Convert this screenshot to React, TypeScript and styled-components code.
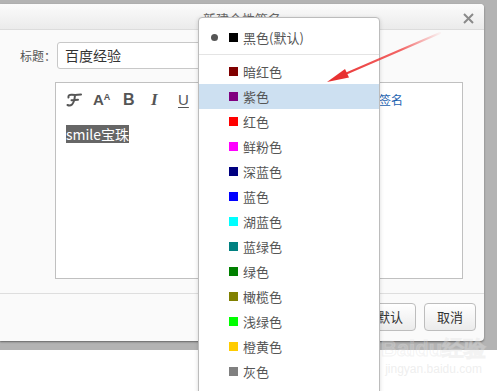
import React from "react";
import styled, { createGlobalStyle } from "styled-components";

const GlobalStyle = createGlobalStyle`
  html, body { margin: 0; padding: 0; height: 100%; overflow: hidden; background: #fff; }
  body { font-family: "Microsoft YaHei", "Noto Sans CJK SC", "Noto Sans", sans-serif; }
  * { box-sizing: border-box; }
`;

const Page = styled.div`
  position: relative;
  width: 497px;
  height: 391px;
  overflow: hidden;
  background: #fff;
`;

const Overlay = styled.div`
  height: 350px;
  background: #b3b3b3;
  padding-top: 4px;
`;

const Dialog = styled.div`
  width: 484px;
  height: 337px;
  background: #fafafa;
  border-radius: 0 4px 4px 0;
  box-shadow: 0 1px 2px rgba(0, 0, 0, 0.45);
  display: flex;
  flex-direction: column;
  overflow: hidden;
`;

const Header = styled.div`
  height: 26px;
  flex: none;
  display: grid;
  grid-template-columns: 32px 1fr 32px;
  align-items: center;
  background: linear-gradient(#fbfbfb, #ebebeb);
  border-bottom: 1px solid #dcdcdc;
`;

const Title = styled.div`
  grid-column: 2;
  text-align: center;
  font-size: 13px;
  line-height: 25px;
  color: #666;
  padding-top: 2px;
`;

const Close = styled.div`
  grid-column: 3;
  display: flex;
  align-items: center;
  justify-content: flex-start;
  padding-left: 11px;
  padding-top: 1px;
`;

const Body = styled.div`
  flex: 1;
  padding: 12px 20px 0 20px;
  display: flex;
  flex-direction: column;
`;

const FieldRow = styled.div`
  display: flex;
  align-items: center;
  height: 27px;
`;

const Label = styled.span`
  width: 37px;
  font-size: 12px;
  color: #555;
  line-height: 27px;
`;

const TextInput = styled.div`
  width: 250px;
  height: 27px;
  border: 1px solid #c8c8c8;
  border-radius: 3px;
  background: #fff;
  padding-left: 7px;
  font-size: 14px;
  line-height: 25px;
  color: #333;
`;

const Editor = styled.div`
  margin: 13px 0 0 35px;
  width: 408px;
  height: 197px;
  border: 1px solid #c0c0c0;
  background: #fff;
  display: flex;
  flex-direction: column;
`;

const Toolbar = styled.div`
  height: 30px;
  display: flex;
  align-items: center;
  padding: 3px 0 0 10px;
  color: #555;
`;

const Tool = styled.span<{ $w: number }>`
  width: ${(p) => p.$w}px;
  display: inline-flex;
  align-items: baseline;
  line-height: 1;
  color: #555;
`;

const BigA = styled.span`
  font-family: "Liberation Sans", Arial, sans-serif;
  font-weight: bold;
  font-size: 15px;
`;

const SmallA = styled.span`
  font-family: "Liberation Sans", Arial, sans-serif;
  font-weight: bold;
  font-size: 9px;
  position: relative;
  top: -5px;
`;

const BoldB = styled.span`
  font-family: "Liberation Sans", Arial, sans-serif;
  font-weight: bold;
  font-size: 16px;
`;

const ItalicI = styled.span`
  font-family: "Liberation Serif", serif;
  font-weight: bold;
  font-style: italic;
  font-size: 17px;
`;

const UnderU = styled.span`
  font-family: "Liberation Sans", Arial, sans-serif;
  font-size: 15px;
  text-decoration: underline;
  text-underline-offset: 2px;
`;

const ToolLink = styled.span`
  margin-left: auto;
  margin-right: 59px;
  font-size: 12px;
  color: #1c62b0;
`;

const Content = styled.div`
  padding: 8px 0 0 10px;
`;

const Selected = styled.span`
  background: #666;
  color: #fff;
  font-size: 14px;
  line-height: 18px;
  display: inline-block;
  height: 18px;
`;

const Footer = styled.div`
  margin: 14px -20px 0 -20px;
  flex: 1;
  border-top: 1px solid #dedede;
  display: flex;
  justify-content: flex-end;
  align-items: flex-start;
  gap: 8px;
  padding: 9px 8px 0 0;
`;

const Button = styled.button`
  height: 28px;
  padding: 0 12px;
  border: 1px solid #bdbdbd;
  border-radius: 4px;
  background: linear-gradient(#ffffff, #ebebeb);
  font-family: "Microsoft YaHei", "Noto Sans CJK SC", sans-serif;
  font-size: 13px;
  color: #333;
  line-height: 26px;
`;

const Menu = styled.div`
  position: absolute;
  left: 198px;
  top: 17px;
  width: 182px;
  height: 400px;
  background: #fff;
  border: 1px solid #bcbcbc;
  border-radius: 4px 4px 0 0;
  box-shadow: 0 1px 4px rgba(0, 0, 0, 0.15);
  padding-top: 7px;
`;

const MenuItem = styled.div<{ $active?: boolean }>`
  height: 25px;
  display: flex;
  align-items: center;
  padding-left: 12px;
  background: ${(p) => (p.$active ? "#cde0f1" : "transparent")};
  font-size: 13px;
  color: #555;
`;

const DotSlot = styled.span`
  width: 18px;
  flex: none;
  display: flex;
  align-items: center;
`;

const Dot = styled.span`
  width: 7px;
  height: 7px;
  border-radius: 50%;
  background: #555;
`;

const Swatch = styled.span<{ $c: string }>`
  width: 9px;
  height: 9px;
  flex: none;
  background: ${(p) => p.$c};
  margin-right: 5px;
`;

const Separator = styled.div`
  height: 1px;
  background: #e4e4e4;
  margin: 4px 0 4px 0;
`;

const ArrowSvg = styled.svg`
  position: absolute;
  left: 0;
  top: 0;
  pointer-events: none;
`;

const Watermark = styled.div`
  position: absolute;
  left: 381px;
  top: 336px;
  display: flex;
  flex-direction: column;
  align-items: center;
  pointer-events: none;
`;

const WmMain = styled.span`
  font-family: "Liberation Sans", Arial, sans-serif;
  font-weight: bold;
  font-size: 22px;
  line-height: 26px;
  color: rgba(255, 255, 255, 0.18);
  -webkit-text-stroke: 1px rgba(215, 215, 215, 0.3);
`;

const WmSub = styled.span`
  font-family: "Liberation Sans", Arial, sans-serif;
  font-size: 12px;
  line-height: 14px;
  color: rgba(225, 225, 225, 0.55);
`;

const colors: [string, string][] = [
  ["暗红色", "#800000"],
  ["紫色", "#800080"],
  ["红色", "#ff0000"],
  ["鲜粉色", "#ff00ff"],
  ["深蓝色", "#000080"],
  ["蓝色", "#0000ff"],
  ["湖蓝色", "#00ffff"],
  ["蓝绿色", "#008080"],
  ["绿色", "#008000"],
  ["橄榄色", "#808000"],
  ["浅绿色", "#00ff00"],
  ["橙黄色", "#ffcc00"],
  ["灰色", "#808080"],
];

export default function App() {
  return (
    <Page>
      <GlobalStyle />
      <Overlay>
        <Dialog>
          <Header>
            <Title>新建个性签名</Title>
            <Close>
              <svg width="11" height="11" viewBox="0 0 11 11">
                <path d="M1 1L10 10M10 1L1 10" stroke="#8a8a8a" strokeWidth="2" />
              </svg>
            </Close>
          </Header>
          <Body>
            <FieldRow>
              <Label>标题：</Label>
              <TextInput>百度经验</TextInput>
            </FieldRow>
            <Editor>
              <Toolbar>
                <Tool $w={27}>
                  <svg width="16" height="14" viewBox="0 0 16 14">
                    <path
                      d="M2.5 4.5 Q2 1.5 6 1.8 Q10 2.2 15 1.5 M9 2 Q8.5 9 6 11.5 Q4 13.2 1.5 12 M5.5 7.2 L12 6.8"
                      stroke="#555"
                      strokeWidth="2"
                      fill="none"
                      strokeLinecap="round"
                    />
                  </svg>
                </Tool>
                <Tool $w={30}>
                  <BigA>A</BigA>
                  <SmallA>A</SmallA>
                </Tool>
                <Tool $w={28}>
                  <BoldB>B</BoldB>
                </Tool>
                <Tool $w={27}>
                  <ItalicI>I</ItalicI>
                </Tool>
                <Tool $w={20}>
                  <UnderU>U</UnderU>
                </Tool>
                <ToolLink>插入个性签名</ToolLink>
              </Toolbar>
              <Content>
                <Selected>smile宝珠</Selected>
              </Content>
            </Editor>
            <Footer>
              <Button>设为默认</Button>
              <Button>取消</Button>
            </Footer>
          </Body>
        </Dialog>
      </Overlay>

      <Watermark>
        <WmMain>Baidu经验</WmMain>
        <WmSub>jingyan.baidu.com</WmSub>
      </Watermark>

      <Menu>
        <MenuItem>
          <DotSlot>
            <Dot />
          </DotSlot>
          <Swatch $c="#000" />
          黑色(默认)
        </MenuItem>
        <Separator />
        {colors.map(([name, c]) => (
          <MenuItem key={name} $active={name === "紫色"}>
            <DotSlot />
            <Swatch $c={c} />
            {name}
          </MenuItem>
        ))}
      </Menu>

      <ArrowSvg width="497" height="391" viewBox="0 0 497 391">
        <defs>
          <linearGradient id="arrowGrad" x1="440" y1="33" x2="330" y2="81" gradientUnits="userSpaceOnUse">
            <stop offset="0" stopColor="#f04848" stopOpacity="0.05" />
            <stop offset="0.35" stopColor="#f04040" stopOpacity="0.8" />
            <stop offset="1" stopColor="#e83030" stopOpacity="1" />
          </linearGradient>
        </defs>
        <path d="M440 33 L344 74.5" stroke="url(#arrowGrad)" strokeWidth="2" fill="none" strokeLinecap="round" />
        <path d="M327 82 L345 69 L349 77.5 Z" fill="#e83232" />
      </ArrowSvg>
    </Page>
  );
}
